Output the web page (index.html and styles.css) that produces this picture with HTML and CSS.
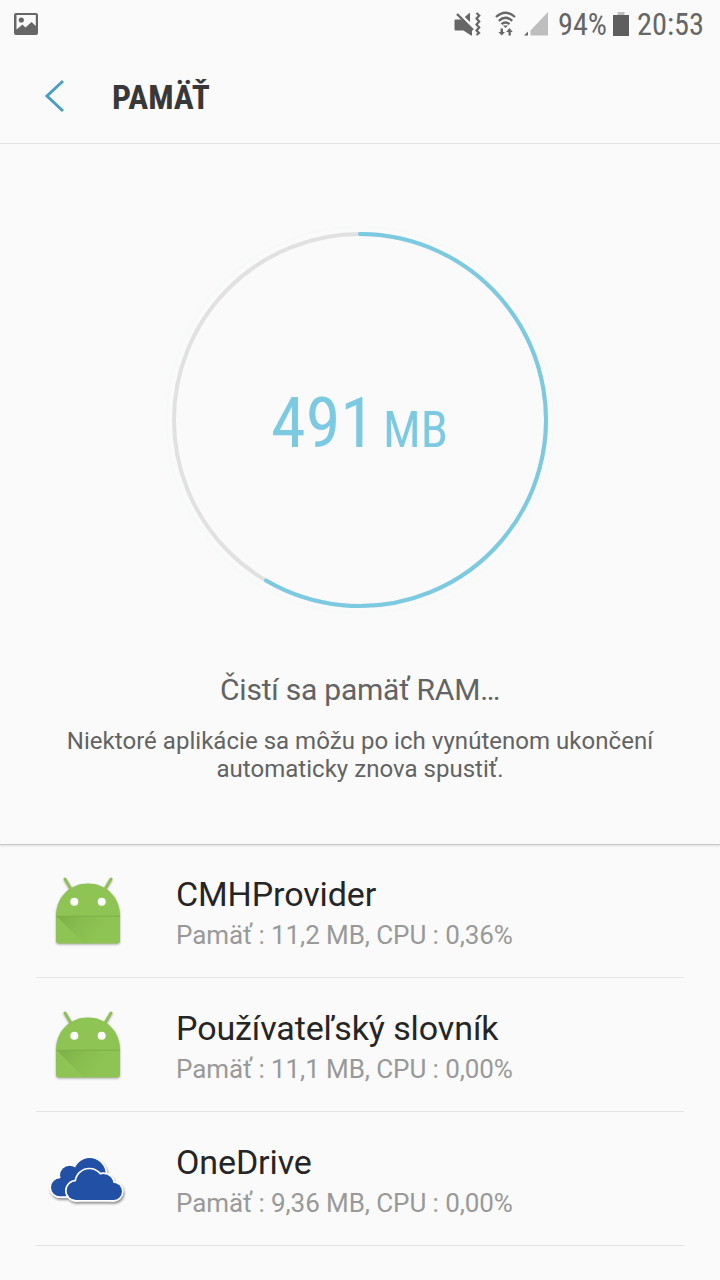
FILE: index.html
```html
<!DOCTYPE html>
<html lang="sk">
<head>
<meta charset="utf-8">
<title>Pamäť</title>
<link rel="stylesheet" href="styles.css">
</head>
<body>
<svg width="0" height="0" class="defs">
  <defs>
    <linearGradient id="fold" gradientUnits="userSpaceOnUse" x1="10" y1="45" x2="46" y2="72">
      <stop offset="0" stop-color="#5e8f35" stop-opacity=".4"/>
      <stop offset="1" stop-color="#7aaa45" stop-opacity="0"/>
    </linearGradient>
    <symbol id="android" viewBox="0 0 80 80">
      <path d="M17 8l6 10M63 8l-6 10" stroke="#8dc252" stroke-width="2.800" stroke-linecap="round"/>
      <path d="M8 45C8 26 22 12.500 40 12.500S72 26 72 45V69.500Q72 72.500 69 72.500H11Q8 72.500 8 69.500Z" fill="#8ec453"/>
      <path d="M9 45.500H72V72.500H36Z" fill="url(#fold)"/>
      <path d="M8 45.200H72" stroke="#7cae48"/>
      <circle cx="26.300" cy="30.700" r="4" fill="#fff"/><circle cx="53.700" cy="30.700" r="4" fill="#fff"/>
    </symbol>
    <g id="cloud-back"><circle cx="60" cy="127" r="27"/><circle cx="89" cy="91" r="29"/><circle cx="149" cy="87" r="48"/><path d="M60 100H170V154H60Z"/></g>
    <g id="cloud-front"><circle cx="108" cy="137" r="28"/><circle cx="148" cy="113" r="40"/><circle cx="190" cy="118" r="31"/><circle cx="220" cy="139" r="26"/><path d="M108 120H220V165H108Z"/></g>
  </defs>
</svg>
<header class="status">
  <svg class="picture" width="24" height="22" viewBox="0 0 24 22"><path fill="#666" fill-rule="evenodd" d="M2 0H22Q24 0 24 2V20Q24 22 22 22H2Q0 22 0 20V2Q0 0 2 0ZM2.500 2V16.500L8.500 11.500L11.500 14.500L17.500 9L21.800 13V2Z"/><circle cx="7.300" cy="7" r="2.600" fill="#666"/></svg>
  <svg width="250" height="40" viewBox="454 4 250 40">
    <g fill="#666">
      <path d="M454.500 20Q454.500 19.500 455.500 19.500H462.500L472 29V35.500H471L463.500 30.500H455.500Q454.500 30.500 454.500 29ZM464.800 17L470 12.500V22Z"/>
      <path d="M457 14L473 30" stroke="#666" stroke-width="2.400"/>
      <path d="M476.500 13L479.200 15.500L476.500 18.500L479.200 21.500L476.500 24.500L479.200 27.500L476.500 30.500L479 33L476.500 35" fill="none" stroke="#666" stroke-width="2.200"/>
      <path d="M496 17Q505.500 8.500 515 17M498.800 20.800Q505.500 14.800 512.200 20.800M501.500 24.200Q505.500 20.700 509.500 24.200" fill="none" stroke="#666" stroke-width="2.300"/>
      <path d="M503 25.500H508L505.500 28ZM500.500 28.500H503V32H505L501.700 35.500L498.500 32H500.500ZM508.500 35.500V32H506.200L509.500 28L512.700 32H510.800V35.500Z"/>
      <path d="M524 35.500L528 31.500V35.500Z"/>
    </g>
    <path d="M530.500 30.500L548 12V35.500H530.500Z" fill="#bebebe"/>
    <path d="M617.500 12H624.500V15H617.500Z" fill="#bebebe"/><path d="M613 15H629V36H613Z" fill="#5e5e5e"/>
    <text class="condensed clock" x="558" y="35" textLength="49" lengthAdjust="spacingAndGlyphs">94%</text>
    <text class="condensed clock" x="637" y="35" textLength="67" lengthAdjust="spacingAndGlyphs">20:53</text>
  </svg>
</header>
<nav class="titlebar">
  <svg width="20" height="34" viewBox="0 0 20 34"><path d="M19 2L3 17L19 32" fill="none" stroke="#489fc2" stroke-width="3"/></svg>
  <svg class="title" width="100" height="48" viewBox="112 72 100 48"><text class="condensed heading" x="112" y="109" textLength="98" lengthAdjust="spacingAndGlyphs">PAMÄŤ</text></svg>
</nav>
<main>
  <section class="summary">
    <svg class="ring" width="400" height="400" viewBox="160 220 400 400">
      <circle cx="360" cy="420" r="193.500" fill="none" stroke="#f7f9f9" stroke-width="2.500"/>
      <circle cx="360" cy="420" r="186" fill="none" stroke="#e1e1e1" stroke-width="4"/>
      <path d="M360 234A186 186 0 1 1 266 580.500" fill="none" stroke="#7bcae1" stroke-width="4" stroke-linecap="round"/>
      <text class="condensed amount" x="271" y="447" textLength="104" lengthAdjust="spacingAndGlyphs">491</text>
      <text class="condensed unit" x="383" y="447" textLength="65" lengthAdjust="spacingAndGlyphs">MB</text>
    </svg>
    <h1>Čistí sa pamäť RAM…</h1>
    <p>Niektoré aplikácie sa môžu po ich vynútenom ukončení<br>automaticky znova spustiť.</p>
  </section>
  <ul class="apps">
    <li><svg class="icon shade"><use href="#android"/></svg><div><h2>CMHProvider</h2><p>Pamäť : 11,2 MB, CPU : 0,36%</p></div></li>
    <li><svg class="icon shade"><use href="#android"/></svg><div><h2>Používateľský slovník</h2><p>Pamäť : 11,1 MB, CPU : 0,00%</p></div></li>
    <li><svg class="icon drive" viewBox="24 -18 240 240"><g fill="#2150a5"><use href="#cloud-back" stroke="#fff" stroke-width="10"/><use href="#cloud-back"/><use href="#cloud-front" stroke="#fff" stroke-width="10"/><use href="#cloud-front"/></g></svg><div><h2>OneDrive</h2><p>Pamäť : 9,36 MB, CPU : 0,00%</p></div></li>
  </ul>
</main>
</body>
</html>
```
FILE: styles.css
```css
* { box-sizing: border-box; margin: 0; padding: 0; }
body { width: 720px; height: 1280px; overflow: hidden; background: #fafafa; font-family: Roboto, sans-serif; }
svg { display: block; flex: none; }
.defs { position: absolute; }
.status { display: flex; justify-content: space-between; height: 48px; padding: 4px 16px 0 14px; }
.picture { margin-top: 9px; }
.condensed { font-family: "Roboto Condensed", Roboto, sans-serif; font-stretch: condensed; }
.clock { font-size: 30.5px; fill: #666; }
.titlebar { display: flex; align-items: center; height: 96px; padding-left: 44px; border-bottom: 1px solid #e4e4e4; }
.title { margin-left: 48px; }
.heading { font-size: 34px; font-weight: 700; fill: #383838; }
.summary { height: 701px; padding-top: 76px; text-align: center; border-bottom: 1px solid #c8c8c8; box-shadow: 0 1px 2px #ddd; }
.ring { margin: 0 auto; }
.amount, .unit { fill: #7bcae1; }
.amount { font-size: 71px; }
.unit { font-size: 50px; }
.summary h1 { margin-top: 50px; font-size: 30px; line-height: 40px; font-weight: 400; letter-spacing: -.22px; color: #636363; }
.summary p { margin-top: 17px; font-size: 24px; line-height: 28px; letter-spacing: .03px; color: #636363; }
.apps { list-style: none; padding: 0 36px; }
.apps li { display: flex; align-items: center; height: 134px; padding-left: 12px; border-bottom: 1px solid #e4e4e4; }
.apps li:first-child { height: 133px; }
.icon { width: 80px; height: 80px; margin-right: 48px; }
.shade { filter: drop-shadow(0 1px 1px #0005); }
.drive { filter: drop-shadow(1px 2px 1px #0006); }
.apps h2 { padding-top: 8px; font-size: 34px; line-height: 41px; font-weight: 400; letter-spacing: -.1px; color: #252525; }
.apps li p { font-size: 26px; line-height: 41px; letter-spacing: -.07px; color: #999; }
```
